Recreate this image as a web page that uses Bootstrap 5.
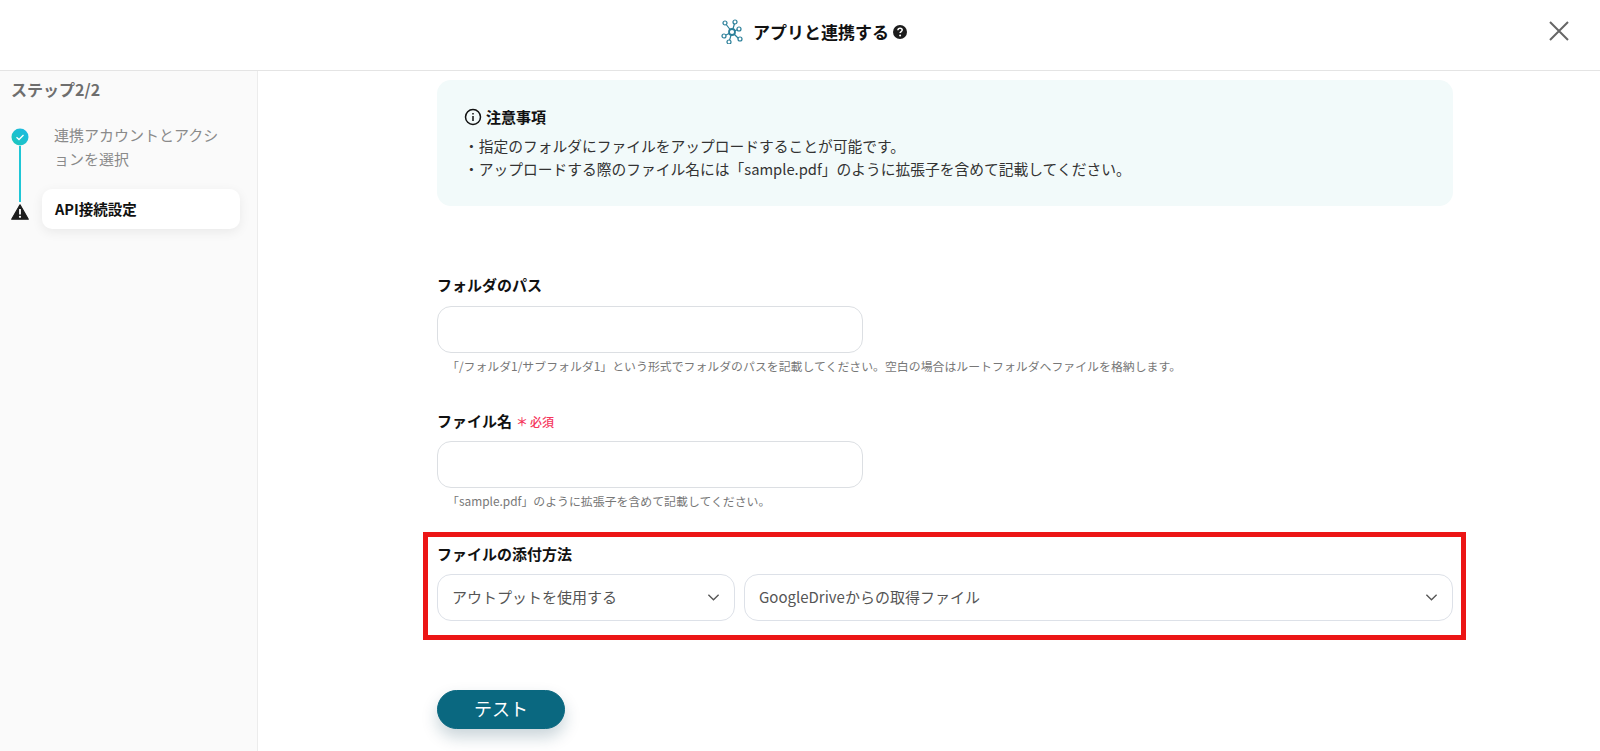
<!DOCTYPE html>
<html lang="ja">
<head>
    <meta charset="UTF-8">
    <meta name="viewport" content="width=device-width, initial-scale=1.0">
    <title>アプリと連携する</title>
    <link href="https://cdn.jsdelivr.net/npm/bootstrap@5.3.0/dist/css/bootstrap.min.css" rel="stylesheet">
    <style>
        html, body { height: 100%; overflow: hidden; }
        body { font-family: "Noto Sans CJK JP", "Noto Sans", sans-serif; color: #111; background: #fff; }
        .top-bar { height: 71px; border-bottom: 1px solid #e4e4e4; padding: 0 0 7px 28px; }
        .top-title { font-size: 17px; font-weight: 700; line-height: 24px; }
        .close-x { right: 31px; top: 21px; }
        .body-wrap { height: 680px; }
        .side-col { width: 258px; background: #fafafa; border-right: 1px solid #ececec; padding: 6px 16px 0 11px; }
        .step-head { font-size: 16px; font-weight: 700; color: #6e6e6e; line-height: 24px; margin-bottom: 27px; }
        .step-row { width: 231px; }
        .step-mark { width: 18px; }
        .step-line { width: 2px; height: 56px; background: #1fc6d6; }
        .step-one { font-size: 15px; line-height: 24px; color: #8a8a8a; width: 172px; margin-left: 25px; margin-top: -5px; }
        .warn-mark { margin-top: 5px; }
        .step-two { font-size: 14.5px; font-weight: 700; width: 198px; height: 40px; margin-left: 13px; padding-left: 13px; border-radius: 10px; box-shadow: 0 3px 12px rgba(0,0,0,.07); }
        .main-col { padding: 9px 0 0 179px; width: 1195px; }
        .note-box { height: 126px; background: #f2fafa; border-radius: 14px; padding: 25px 27px; }
        .note-title { font-size: 15px; font-weight: 700; line-height: 24px; margin-bottom: 5px; }
        .note-text { font-size: 14.75px; line-height: 23px; color: #333; }
        .fld-label { font-size: 15px; font-weight: 700; line-height: 22px; margin-bottom: 9px; }
        .label-wide { margin-bottom: 10px; }
        .label-tight { margin-bottom: 8px; }
        .req-mark { color: #f5365c; font-size: 12px; font-weight: 500; }
        .req-star { margin-right: 2px; }
        .text-fld { width: 426px; height: 47px; border: 1px solid #dcdfe3; border-radius: 14px; }
        .hint-text { font-size: 11.9px; line-height: 18px; color: #777; padding-left: 10px; margin-top: 4px; }
        .sel-fld { height: 47px; border: 1px solid #dde1e8; border-radius: 14px; font-size: 15px; color: #555; padding-left: 14px; background-image: url("data:image/svg+xml,%3csvg xmlns='http://www.w3.org/2000/svg' viewBox='0 0 14 9'%3e%3cpath fill='none' stroke='%23555' stroke-width='1.4' d='M1.500 1.500 7 7l5.500-5.500'/%3e%3c/svg%3e"); background-size: 13px 9px; background-position: right 14px center; }
        .sel-one { width: 298px; margin-right: 1px; }
        .run-btn { width: 128px; height: 39px; font-size: 18px; line-height: 1; padding: 0 0 3px; border-radius: 20px; background: #0a6880; border-color: #0a6880; box-shadow: 0 8px 16px rgba(10,60,80,.22); }
        .run-btn:hover { background: #0a6880; border-color: #0a6880; }
        .red-frame { left: 423px; top: 532px; width: 1043px; height: 108px; border: 5px solid #ec1515; pointer-events: none; }
    </style>
</head>
<body class="position-relative">
    <header class="top-bar d-flex align-items-center justify-content-center position-relative">
        <div class="d-flex align-items-center">
            <svg width="22" height="25" viewBox="0 0 22 25" fill="none" stroke="#2b7f99" stroke-width="1.200" style="margin-right: 10px">
                <path d="M11 13 4 4M11 13l3-10M11 13l7-3M11 13l-8 4M11 13l-3 10M11 13l7 7"/>
                <circle cx="11" cy="13" r="3" fill="#fff" stroke-width="1.800"/>
                <circle cx="4" cy="4" r="2" fill="#fff"/><circle cx="14" cy="3" r="2" fill="#fff"/>
                <circle cx="18" cy="10" r="2" fill="#fff"/><circle cx="19" cy="20" r="2" fill="#fff"/>
                <circle cx="8" cy="23" r="2" fill="#fff"/><circle cx="3" cy="17" r="2" fill="#fff"/>
            </svg>
            <span class="top-title">アプリと連携する</span>
            <svg width="14" height="14" viewBox="0 0 14 14" class="ms-1">
                <circle cx="7" cy="7" r="7" fill="#1c1c1c"/>
                <path d="M4.900 5.300C5 3.900 6 3.300 7.100 3.300c1.200 0 2.100.8 2.100 1.800 0 1.500-2.100 1.500-2.100 3" fill="none" stroke="#fff" stroke-width="1.500"/>
                <circle cx="7.100" cy="10.400" r="1" fill="#fff"/>
            </svg>
        </div>
        <svg class="close-x position-absolute" width="20" height="20" viewBox="0 0 20 20" stroke="#666" stroke-width="2" fill="none">
            <path d="M1 1 19 19M19 1 1 19"/>
        </svg>
    </header>

    <div class="body-wrap d-flex">
        <aside class="side-col flex-shrink-0">
            <div class="step-head">ステップ2/2</div>
            <div class="step-row d-flex">
                <div class="step-mark d-flex flex-column align-items-center flex-shrink-0">
                    <svg width="18" height="18" viewBox="0 0 18 18" class="flex-shrink-0">
                        <defs><linearGradient id="chk" x1="0" y1="1" x2="1" y2="0"><stop offset="0" stop-color="#1cc8b8"/><stop offset="1" stop-color="#1cb8e6"/></linearGradient></defs>
                        <circle cx="9" cy="9" r="8.500" fill="url(#chk)"/>
                        <path d="M5.500 9.200 8 11.500l4.500-4.500" fill="none" stroke="#fff" stroke-width="1.300"/>
                    </svg>
                    <div class="step-line"></div>
                </div>
                <div class="step-one">連携アカウントとアクションを選択</div>
            </div>
            <div class="step-row d-flex align-items-center" style="margin-top: -13px">
                <svg class="step-mark warn-mark flex-shrink-0" width="18" height="16" viewBox="0 0 18 16">
                    <path d="M9 .8 17.300 15.200H.7Z" fill="#1c1c1c" stroke="#1c1c1c" stroke-linejoin="round" stroke-width="1.200"/>
                    <path d="M9 5v5.500" stroke="#fff" stroke-width="1.800"/><circle cx="9" cy="12.800" r="1.100" fill="#fff"/>
                </svg>
                <div class="step-two bg-white d-flex align-items-center">API接続設定</div>
            </div>
        </aside>

        <main class="main-col">
            <section class="note-box">
                <div class="note-title d-flex align-items-center gap-1">
                    <svg width="18" height="18" viewBox="0 0 18 18" fill="none" stroke="#111" stroke-width="1.500">
                        <circle cx="9" cy="9" r="7.500"/><path d="M9 8v5M9 5v1.600"/>
                    </svg>
                    <span>注意事項</span>
                </div>
                <div class="note-text">・指定のフォルダにファイルをアップロードすることが可能です。<br>・アップロードする際のファイル名には「sample.pdf」のように拡張子を含めて記載してください。</div>
            </section>

            <div style="margin-top: 68px">
                <label class="fld-label label-wide d-block">フォルダのパス</label>
                <input type="text" class="form-control text-fld">
                <div class="hint-text">「/フォルダ1/サブフォルダ1」という形式でフォルダのパスを記載してください。空白の場合はルートフォルダへファイルを格納します。</div>
            </div>

            <div style="margin-top: 35px">
                <label class="fld-label label-tight d-block">ファイル名<span class="req-mark ms-1"><span class="req-star">＊</span>必須</span></label>
                <input type="text" class="form-control text-fld">
                <div class="hint-text">「sample.pdf」のように拡張子を含めて記載してください。</div>
            </div>

            <div style="margin-top: 33px">
                <label class="fld-label d-block">ファイルの添付方法</label>
                <div class="d-flex gap-2">
                    <select class="form-select sel-fld sel-one flex-shrink-0"><option>アウトプットを使用する</option></select>
                    <select class="form-select sel-fld flex-grow-1"><option>GoogleDriveからの取得ファイル</option></select>
                </div>
            </div>

            <button type="button" class="btn btn-primary run-btn" style="margin-top: 69px">テスト</button>
        </main>
    </div>

    <div class="red-frame position-absolute"></div>
    <script src="https://cdn.jsdelivr.net/npm/bootstrap@5.3.0/dist/js/bootstrap.bundle.min.js"></script>
</body>
</html>
